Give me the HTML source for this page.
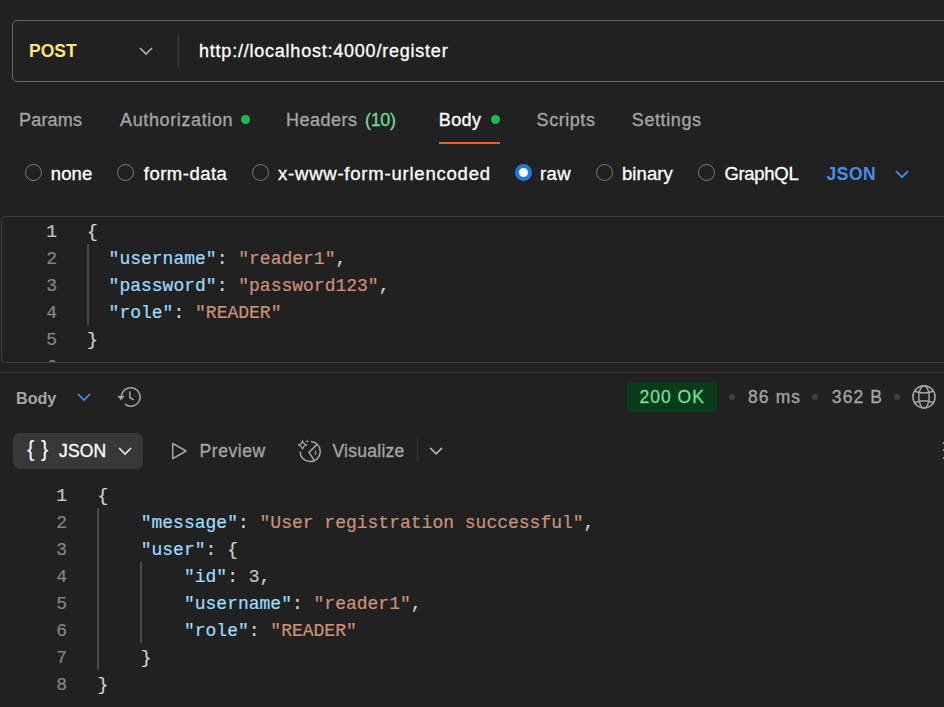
<!DOCTYPE html>
<html><head><meta charset="utf-8">
<style>
*{box-sizing:border-box;margin:0;padding:0}
html,body{width:944px;height:707px;overflow:hidden;background:#212121}
body{position:relative;font-family:"Liberation Sans",sans-serif;color:#fff}
.abs{position:absolute;white-space:pre}
.t{position:absolute;white-space:pre;line-height:24px;font-size:17.5px;-webkit-text-stroke:0.3px currentColor}
.mono{font-family:"Liberation Mono",monospace;font-size:18px;line-height:27px;position:absolute;white-space:pre;-webkit-text-stroke:0.2px currentColor}
.ln{color:#858585;text-align:right}
.k{color:#9cdcfe}.s{color:#ce9178}.p{color:#d4d4d4}.n{color:#b5cea8}
.radio{position:absolute;width:17px;height:17px;border-radius:50%;border:1px solid #7d7d7d}
.dot{position:absolute;width:9px;height:9px;border-radius:50%;background:#1db954}
.sep{position:absolute;width:6px;height:6px;border-radius:50%;background:#3f3f3f}
svg{position:absolute;overflow:visible}
</style></head><body>

<!-- URL bar -->
<div class="abs" style="left:12px;top:20px;width:960px;height:62px;border:1px solid #686868;border-radius:5px"></div>
<div class="abs" style="left:178px;top:33px;width:1px;height:36px;background:#3d3d3d"></div>

<!-- tabs -->
<div class="dot" style="left:241px;top:115px"></div>
<div class="dot" style="left:491px;top:115px"></div>
<div class="abs" style="left:439px;top:142px;width:61px;height:2px;background:#e8622c"></div>

<!-- radios -->
<div class="radio" style="left:25px;top:164px"></div>
<div class="radio" style="left:117px;top:164px"></div>
<div class="radio" style="left:252px;top:164px"></div>
<div class="radio" style="left:515px;top:164px;border:4.5px solid #1f7ae0;background:#fff"></div>
<div class="radio" style="left:596px;top:164px"></div>
<div class="radio" style="left:698px;top:164px"></div>

<!-- request editor -->
<div class="abs" style="left:1px;top:216px;width:960px;height:147px;border:1px solid #3e3e3e;border-radius:4px"></div>
<div class="abs" style="left:3px;top:217px;width:941px;height:145px;overflow:hidden"><div class="mono ln" style="left:13px;top:1.5px;width:41px"><span style="color:#c6c6c6">1</span>
2
3
4
5
6</div></div>
<div class="mono p" style="left:87px;top:218.5px">{
  <span class="k">"username"</span>: <span class="s">"reader1"</span>,
  <span class="k">"password"</span>: <span class="s">"password123"</span>,
  <span class="k">"role"</span>: <span class="s">"READER"</span>
}</div>
<div class="abs" style="left:87px;top:244px;width:1.5px;height:81px;background:#4a4a4a"></div>

<!-- response header -->
<div class="abs" style="left:0;top:372px;width:944px;height:1px;background:#363636"></div>

<div class="abs" style="left:627px;top:382px;width:90px;height:30px;background:#083c1b;border-radius:4px"></div>
<div class="sep" style="left:729px;top:393.5px"></div>
<div class="sep" style="left:812px;top:393.5px"></div>
<div class="sep" style="left:894px;top:393.5px"></div>

<!-- response toolbar -->
<div class="abs" style="left:13px;top:433px;width:130px;height:36px;background:#383838;border-radius:7px"></div>
<div class="abs" style="left:417px;top:439px;width:1px;height:24px;background:#383838"></div>

<!-- response code -->
<div class="mono ln" style="left:26px;top:482.5px;width:41px"><span style="color:#c6c6c6">1</span>
2
3
4
5
6
7
8</div>
<div class="mono p" style="left:97.5px;top:482.5px">{
    <span class="k">"message"</span>: <span class="s">"User registration successful"</span>,
    <span class="k">"user"</span>: {
        <span class="k">"id"</span>: <span class="n">3</span>,
        <span class="k">"username"</span>: <span class="s">"reader1"</span>,
        <span class="k">"role"</span>: <span class="s">"READER"</span>
    }
}</div>
<div class="abs" style="left:97px;top:508px;width:1.5px;height:162px;background:#4a4a4a"></div>
<div class="abs" style="left:140.2px;top:562px;width:1.5px;height:81px;background:#4a4a4a"></div>

<svg style="left:0;top:0" width="944" height="707" viewBox="0 0 944 707" fill="none" stroke-linecap="butt">
<path d="M140 48 L146 54 L152 48" stroke="#b0b0b0" stroke-width="1.7"/>
<path d="M896 171.2 L902 177.2 L908 171.2" stroke="#4490ea" stroke-width="1.7"/>
<path d="M78 394 L84 400 L90 394" stroke="#4490ea" stroke-width="1.7"/>
<path d="M119.1 448 L125.1 454 L131.1 448" stroke="#e6e6e6" stroke-width="1.7"/>
<path d="M430.1 447.8 L436.1 453.8 L442.1 447.8" stroke="#b0b0b0" stroke-width="1.7"/>
<g stroke="#a6a6a6" stroke-width="1.5">
<path d="M121.5 397 A9.3 9.3 0 1 1 124.95 404.2"/>
<path d="M118 395.9 L121 399.3 L124 395.9" fill="#a6a6a6" stroke-width="1.1" stroke-linejoin="round"/>
<path d="M129.8 391.3 V397.5 L133.6 399.9"/>
<circle cx="924" cy="396.9" r="11.1"/>
<ellipse cx="924" cy="396.9" rx="5.2" ry="11.1"/>
<path d="M914.6 391 Q924 395.2 933.4 391 M914.6 402.8 Q924 398.6 933.4 402.8"/>
<path d="M172.7 443.5 L186.2 451 L172.7 458.6 Z" stroke-linejoin="round"/>
<path d="M311 441.45 A10.1 10.1 0 1 1 300.1 451.4"/>
<path d="M317.2 444.1 L309 452.4 L314.5 460.6"/>
<path d="M302.5 440.7 Q303.2 444.3 306.8 445 Q303.2 445.7 302.5 449.3 Q301.8 445.7 298.2 445 Q301.8 444.3 302.5 440.7 Z" stroke-width="1.2" stroke-linejoin="round"/>
<path d="M307.2 439.6 L307.9 440.9 L309.2 441.1 L307.9 441.6 L307.2 442.9 L306.6 441.6 L305.3 441.1 L306.6 440.9 Z" fill="#a6a6a6" stroke="none"/>
<path d="M315.6 450.6 L314.9 452.8 L316.1 452.8 L315.4 455" stroke-width="1"/>
</g>
</svg>
<div class="abs" style="left:942.6px;top:442px;width:2px;height:2px;background:#909090"></div>
<div class="abs" style="left:942.6px;top:449px;width:2px;height:2px;background:#909090"></div>
<div class="abs" style="left:942.6px;top:457px;width:2px;height:2px;background:#909090"></div>
<div id="post" class="t" style="left:29.00px;top:38.94px;font-size:17.5px;font-weight:bold;color:#ffe47e;letter-spacing:0.000px;-webkit-text-stroke:0">POST</div>
<div id="url" class="t" style="left:199.00px;top:38.76px;font-size:18px;font-weight:normal;color:#ffffff;letter-spacing:0.776px">http://localhost:4000/register</div>
<div id="params" class="t" style="left:19.00px;top:107.76px;font-size:18px;font-weight:normal;color:#a6a6a6;letter-spacing:0.200px">Params</div>
<div id="auth" class="t" style="left:120.00px;top:107.76px;font-size:18px;font-weight:normal;color:#a6a6a6;letter-spacing:0.625px">Authorization</div>
<div id="headers" class="t" style="left:286.00px;top:107.76px;font-size:18px;font-weight:normal;color:#a6a6a6;letter-spacing:0.500px">Headers</div>
<div id="hcount" class="t" style="left:365.00px;top:107.76px;font-size:18px;font-weight:normal;color:#6fdc8c;letter-spacing:-0.333px">(10)</div>
<div id="bodytab" class="t" style="left:438.80px;top:107.76px;font-size:18px;font-weight:normal;color:#ffffff;letter-spacing:0.400px">Body</div>
<div id="scripts" class="t" style="left:536.60px;top:107.76px;font-size:18px;font-weight:normal;color:#a6a6a6;letter-spacing:0.550px">Scripts</div>
<div id="settings" class="t" style="left:631.80px;top:107.76px;font-size:18px;font-weight:normal;color:#a6a6a6;letter-spacing:0.600px">Settings</div>
<div id="none" class="t" style="left:50.80px;top:161.89px;font-size:18.5px;font-weight:normal;color:#ffffff;letter-spacing:0.100px">none</div>
<div id="formdata" class="t" style="left:143.80px;top:161.89px;font-size:18.5px;font-weight:normal;color:#ffffff;letter-spacing:0.488px">form-data</div>
<div id="urlenc" class="t" style="left:278.00px;top:161.89px;font-size:18.5px;font-weight:normal;color:#ffffff;letter-spacing:0.785px">x-www-form-urlencoded</div>
<div id="raw" class="t" style="left:540.00px;top:161.89px;font-size:18.5px;font-weight:normal;color:#ffffff;letter-spacing:0.400px">raw</div>
<div id="binary" class="t" style="left:622.00px;top:161.89px;font-size:18.5px;font-weight:normal;color:#ffffff;letter-spacing:0.080px">binary</div>
<div id="graphql" class="t" style="left:724.40px;top:161.89px;font-size:18.5px;font-weight:normal;color:#ffffff;letter-spacing:-0.300px">GraphQL</div>
<div id="jsonsel" class="t" style="left:826.40px;top:162.24px;font-size:17.5px;font-weight:bold;color:#4490ea;letter-spacing:0.567px;-webkit-text-stroke:0">JSON</div>
<div id="bodyresp" class="t" style="left:16.00px;top:385.59px;font-size:16.2px;font-weight:bold;color:#a6a6a6;letter-spacing:-0.033px;-webkit-text-stroke:0">Body</div>
<div id="status" class="t" style="left:639.40px;top:384.54px;font-size:17.5px;font-weight:normal;color:#75df97;letter-spacing:1.040px">200 OK</div>
<div id="time" class="t" style="left:748.00px;top:384.74px;font-size:17.5px;font-weight:normal;color:#a6a6a6;letter-spacing:1.100px">86 ms</div>
<div id="size" class="t" style="left:831.80px;top:384.74px;font-size:17.5px;font-weight:normal;color:#a6a6a6;letter-spacing:1.100px">362 B</div>
<div id="lbrace" class="t" style="left:27.00px;top:437.38px;font-size:22px;font-weight:normal;color:#ffffff;letter-spacing:0.000px;-webkit-text-stroke:0">{</div>
<div id="rbrace" class="t" style="left:41.00px;top:437.38px;font-size:22px;font-weight:normal;color:#ffffff;letter-spacing:0.000px;-webkit-text-stroke:0">}</div>
<div id="jsonbtn" class="t" style="left:59.00px;top:438.94px;font-size:17.5px;font-weight:normal;color:#ffffff;letter-spacing:0.167px">JSON</div>
<div id="preview" class="t" style="left:199.60px;top:438.94px;font-size:17.5px;font-weight:normal;color:#a6a6a6;letter-spacing:0.533px">Preview</div>
<div id="visualize" class="t" style="left:332.40px;top:438.94px;font-size:17.5px;font-weight:normal;color:#a6a6a6;letter-spacing:0.275px">Visualize</div>
</body></html>
